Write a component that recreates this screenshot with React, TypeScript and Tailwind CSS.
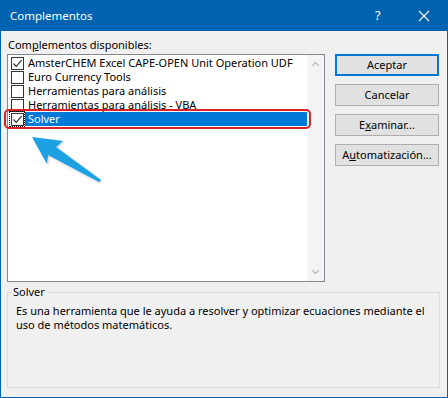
import React from "react";

const font = { fontFamily: '"Noto Sans", "Segoe UI", sans-serif' };

function Check({ checked, focus }: { checked: boolean; focus?: boolean }) {
  return (
    <div className={`w-[14px] h-[14px] flex items-center justify-center ${focus ? "outline outline-1 outline-dotted outline-black" : ""}`}>
      <div className="w-[13px] h-[13px] border border-[#333333] bg-white flex items-center justify-center">
        {checked && (
          <svg width="11" height="11" viewBox="0 0 11 11">
            <path d="M1.5 5.5 L4.2 8.3 L9.6 2.2" fill="none" stroke="#333" strokeWidth="1.2" />
          </svg>
        )}
      </div>
    </div>
  );
}

const items = [
  { label: "AmsterCHEM Excel CAPE-OPEN Unit Operation UDF", checked: true },
  { label: "Euro Currency Tools", checked: false },
  { label: "Herramientas para análisis", checked: false },
  { label: "Herramientas para análisis - VBA", checked: false },
  { label: "Solver", checked: true, selected: true },
];

function Btn({ children, primary }: { children: React.ReactNode; primary?: boolean }) {
  return (
    <div
      className={`w-[104px] h-[22px] flex items-center justify-center bg-[#e1e1e1] text-[11px] text-black ${
        primary ? "border-2 border-[#0078d7]" : "border border-[#adadad]"
      }`}
    >
      {children}
    </div>
  );
}

export default function App() {
  return (
    <div className="w-[448px] h-[398px] bg-[#0063b1] flex flex-col px-[1px] pb-[1px]" style={font}>
      <div className="h-[31px] flex items-center text-white text-[11.5px] pl-[9px] shrink-0">
        <span className="flex-1">Complementos</span>
        <span className="w-[10px] text-[13px] mr-[33px]">?</span>
        <svg width="12" height="12" viewBox="0 0 12 12" className="mr-[17px]">
          <path d="M1 1 L11 11 M11 1 L1 11" stroke="white" strokeWidth="1.1" />
        </svg>
      </div>
      <div className="flex-1 bg-[#f0f0f0] relative flex flex-col pl-[6px] pr-[7px] text-black">
        <div className="text-[11px] h-[16px] leading-[16px] mt-[6px] ml-[1px]">
          Com<u>p</u>lementos disponibles:
        </div>
        <div className="flex mt-[1px] gap-[10px]">
          <div className="w-[318px] h-[228px] border border-[#828790] bg-white flex">
            <div className="flex-1 flex flex-col pt-[1px]">
              {items.map((it, i) => (
                <div key={i} className="h-[14px] flex items-center pl-[2px] relative">
                  <Check checked={it.checked} focus={it.selected} />
                  <div
                    className={`flex-1 h-[14px] leading-[14px] text-[11px] pl-[3px] ml-[1px] whitespace-nowrap ${
                      it.selected ? "bg-[#0078d7] text-white" : ""
                    }`}
                  >
                    {it.label}
                  </div>
                  {it.selected && (
                    <div className="absolute left-[-4px] right-[-4px] top-[-3px] bottom-[-3px] border-2 border-[#d8232a] rounded-[5px]" />
                  )}
                </div>
              ))}
            </div>
            <div className="w-[17px] bg-[#f4f4f4] flex flex-col justify-between items-center py-[6px]">
              <svg width="9" height="6" viewBox="0 0 9 6">
                <path d="M1 5 L4.5 1.5 L8 5" fill="none" stroke="#bfbfbf" strokeWidth="1.3" />
              </svg>
              <svg width="9" height="6" viewBox="0 0 9 6">
                <path d="M1 1 L4.5 4.5 L8 1" fill="none" stroke="#bfbfbf" strokeWidth="1.3" />
              </svg>
            </div>
          </div>
          <div className="flex flex-col gap-[8px]">
            <Btn primary>Aceptar</Btn>
            <Btn>Cancelar</Btn>
            <Btn>
              E<u>x</u>aminar...
            </Btn>
            <Btn>
              A<u>u</u>tomatización...
            </Btn>
          </div>
        </div>
        <div className="relative mt-[10px] h-[96px] w-[433px] border border-[#dcdcdc] pt-[11px] pl-[8px] pr-[4px]">
          <span className="absolute left-[3px] top-[-9px] bg-[#f0f0f0] px-[2px] text-[11px] leading-[16px]">Solver</span>
          <div className="text-[11px] leading-[14px]">
            Es una herramienta que le ayuda a resolver y optimizar ecuaciones mediante el uso de métodos matemáticos.
          </div>
        </div>
        <svg className="absolute left-[-1px] top-[-31px] pointer-events-none" width="448" height="398" viewBox="0 0 448 398">
          <defs>
            <filter id="sh" x="-20%" y="-20%" width="140%" height="140%">
              <feDropShadow dx="1" dy="1" stdDeviation="1" floodColor="#000" floodOpacity="0.25" />
            </filter>
          </defs>
          <polygon
            points="32,137 63,141 56,147 101,180 99,182 48,155 47,164"
            fill="#1ba1e2"
            filter="url(#sh)"
          />
        </svg>
      </div>
    </div>
  );
}
